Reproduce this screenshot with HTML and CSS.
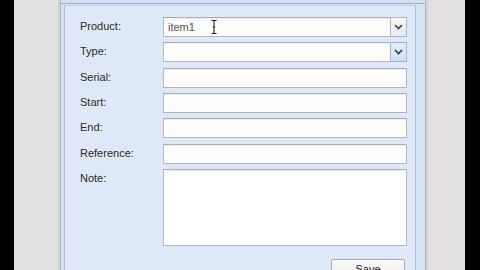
FILE: index.html
```html
<!DOCTYPE html>
<html>
<head>
<meta charset="utf-8">
<link rel="stylesheet" href="styles.css">
</head>
<body>
<div class="screen">
  <div class="bar"></div>
  <div class="gutter-l"></div>
  <div class="window">
    <div class="frame-top"></div>
    <div class="frame-body">
      <div class="panel">
        <div class="form">
          <div class="row">
            <label class="lbl">Product:</label>
            <div class="combo">
              <div class="input">item1
                <svg class="ibeam" width="6" height="14" viewBox="0 0 6 14"><path d="M0.5 0.5h2l0.5 0.8 0.5-0.8h2M3 1.3v11.4M0.5 13.5h2l0.5-0.8 0.5 0.8h2M1.8 7h2.4" fill="none" stroke="#222" stroke-width="1.1"/></svg>
              </div>
              <div class="trigger"><svg width="9" height="6" viewBox="0 0 9 6"><path d="M1 1l3.5 3.5L8 1" fill="none" stroke="#3b4452" stroke-width="1.6"/></svg></div>
            </div>
          </div>
          <div class="row">
            <label class="lbl">Type:</label>
            <div class="combo">
              <div class="input"></div>
              <div class="trigger hot"><svg width="9" height="6" viewBox="0 0 9 6"><path d="M1 1l3.5 3.5L8 1" fill="none" stroke="#2d3f57" stroke-width="1.6"/></svg></div>
            </div>
          </div>
          <div class="row"><label class="lbl">Serial:</label><div class="input"></div></div>
          <div class="row"><label class="lbl">Start:</label><div class="input"></div></div>
          <div class="row"><label class="lbl">End:</label><div class="input"></div></div>
          <div class="row"><label class="lbl">Reference:</label><div class="input"></div></div>
          <div class="row"><label class="lbl">Note:</label><div class="input area"></div></div>
        </div>
        <div class="buttons"><button class="btn">Save</button></div>
      </div>
    </div>
  </div>
  <div class="gutter-r"></div>
  <div class="bar r"></div>
</div>
</body>
</html>
```
FILE: styles.css
```css
html, body { margin: 0; padding: 0; }
body { background: #000; width: 480px; height: 270px; overflow: hidden; font-family: "Liberation Sans", Arial, sans-serif; }
.screen { display: flex; height: 270px; overflow: hidden; }
.bar { width: 14px; background: #000; flex: none; }
.bar.r { width: 15px; }
.gutter-l { width: 46px; background: #e2e1df; flex: none; box-shadow: inset -2px 0 0 #d2d1cf; }
.gutter-r { width: 39px; background: #e2e1df; flex: none; box-shadow: inset 2px 0 0 #d4d3d1; }
.window { width: 366px; height: 270px; overflow: hidden; flex: none; display: flex; flex-direction: column; background: #cddcf0; border-left: 1px solid #a9b8cc; border-right: 1px solid #aebbd0; box-sizing: border-box; }
.frame-top { height: 3px; flex: none; background: #d3e0f2; border-bottom: 1px solid #9fb4d2; }
.frame-body { flex: 1; min-height: 0; display: flex; padding: 1px 9px 0 3px; background: #d6e3f5; }
.panel { flex: 1; overflow: hidden; background: #dfe8f6; border-left: 1px solid #b0c2dc; border-right: 1px solid #b0c2dc; border-top: 1px solid #c4d3e8; padding: 11px 7px 0 15px; display: flex; flex-direction: column; }
.form { display: flex; flex-direction: column; gap: 5.33px; flex: none; }
.row { display: flex; align-items: flex-start; }
.lbl { width: 83px; flex: none; font-size: 11px; color: #2b2b2b; line-height: 13px; padding-top: 3px; }
.combo { display: flex; width: 244px; height: 20px; }
.combo .input { width: auto; flex: 1; border-right: none; }
.input { width: 244px; height: 20px; box-sizing: border-box; background: #fdfdfd; border: 1px solid #b4b8c4; border-top-color: #a9adb9; box-shadow: inset 0 1px 0 #f0f0f0; font-size: 11px; color: #555; padding: 3px 0 0 4px; position: relative; line-height: 13px; }
.input.area { height: 77px; background: #fff; }
.ibeam { position: absolute; left: 47px; top: 2px; }
.trigger { width: 17px; height: 20px; box-sizing: border-box; border: 1px solid #b4b8c4; background: linear-gradient(#f6f6f6, #e9eaec); display: flex; align-items: center; justify-content: center; }
.trigger.hot { background: linear-gradient(#e2edf9, #cfe0f4); border-color: #99b6da; }
.buttons { display: flex; justify-content: flex-end; padding-top: 13px; flex: none; }
.btn { width: 74px; height: 22px; margin-right: 3px; border: 1px solid #a8acb4; border-radius: 2px; background: linear-gradient(#fafafa, #ececec); font-family: "Liberation Sans", Arial, sans-serif; font-size: 11px; color: #222; padding: 3px 0 0 0; line-height: 13px; display: flex; justify-content: center; align-items: flex-start; }
```
